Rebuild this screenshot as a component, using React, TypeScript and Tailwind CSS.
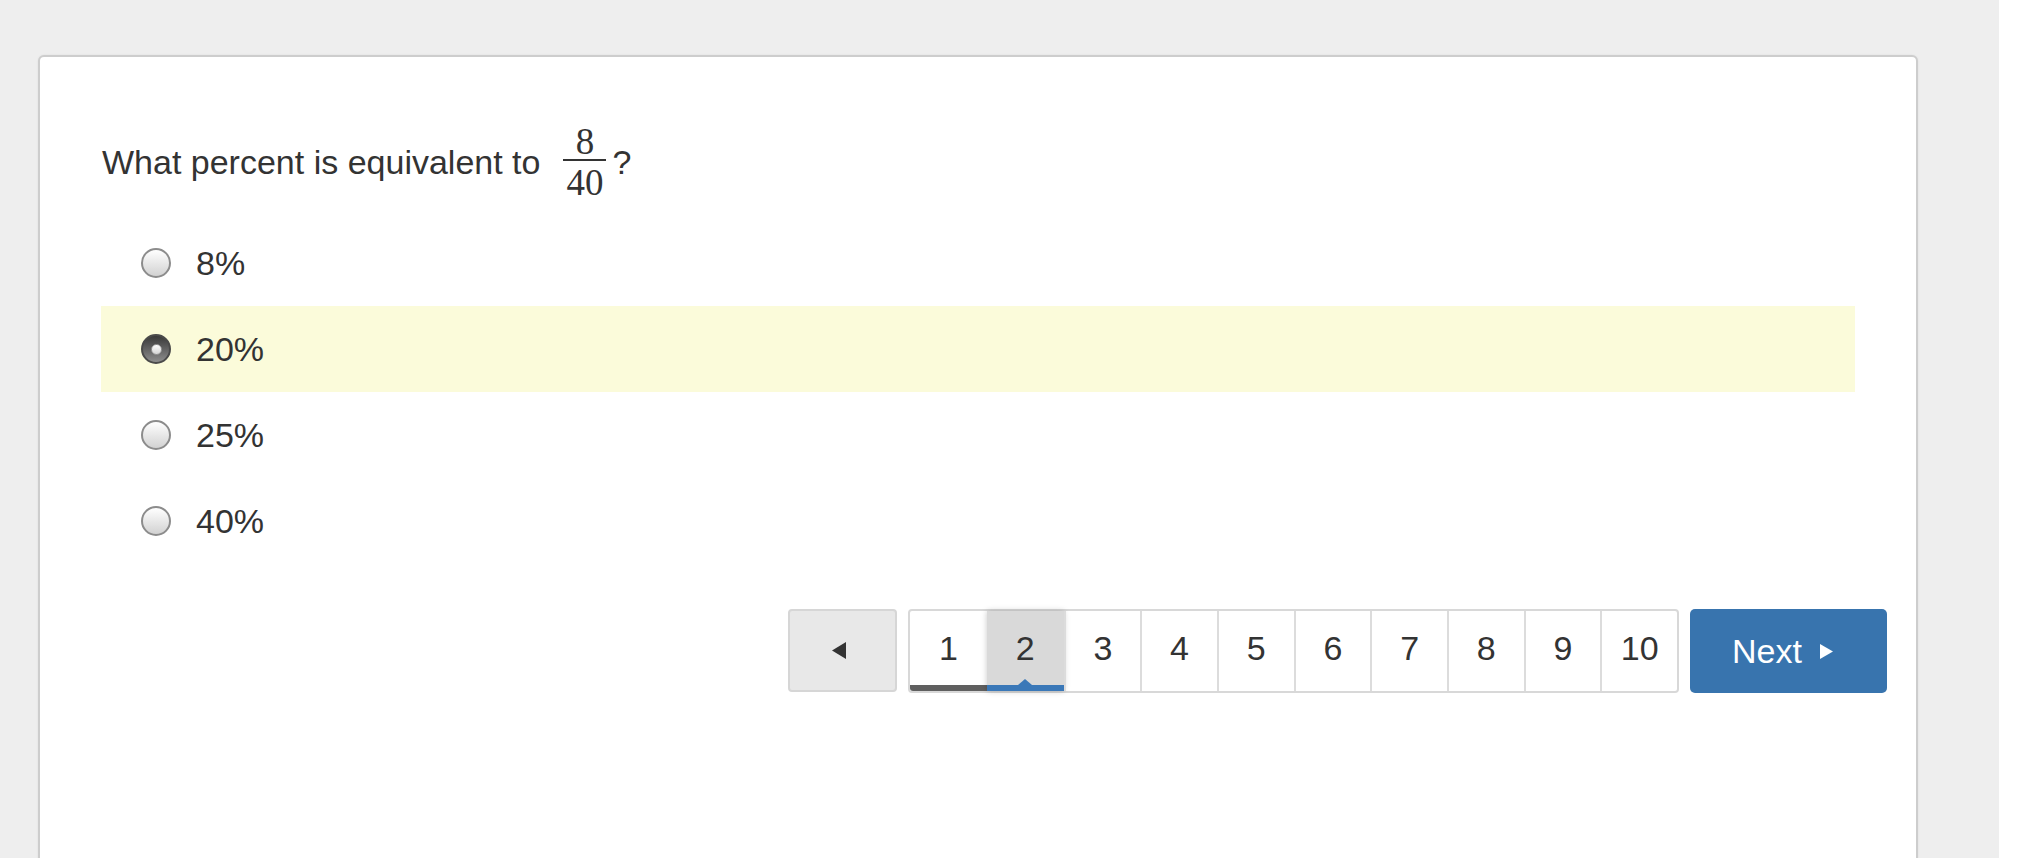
const OPTIONS = ["8%", "20%", "25%", "40%"];
const PAGES = [1, 2, 3, 4, 5, 6, 7, 8, 9, 10];

function Radio({ checked }: { checked: boolean }) {
  if (checked) {
    return (
      <span className="flex h-[30px] w-[30px] shrink-0 items-center justify-center rounded-full border-2 border-[#4a4a4a] bg-linear-to-b from-[#3a3a3a] to-[#8e8e8e]">
        <span className="h-[11px] w-[11px] rounded-full border border-[#9a9a9a] bg-linear-to-b from-white to-[#d4d4d4]" />
      </span>
    );
  }
  return (
    <span className="h-[30px] w-[30px] shrink-0 rounded-full border-2 border-[#8c8c8c] bg-linear-to-b from-white to-[#d2d2d2]" />
  );
}

export default function App() {
  const selected = 1;
  const page = 2;

  return (
    <div className="flex h-[858px] w-[2040px] overflow-hidden bg-white font-['Liberation_Sans',Arial,sans-serif] text-[#333]">
      <div className="w-[1999px] shrink-0 bg-[#eeeeee] pl-[38px] pt-[55px]">
        <div className="h-[840px] w-[1880px] rounded-t-[6px] border-2 border-[#cdcdcd] bg-white pt-[67px] shadow-[0_0_2px_rgba(0,0,0,0.08)]">
          {/* question + answers */}
          <div className="px-[61px]">
            <div className="flex items-center text-[34px] leading-[40px]">
              <span className="pl-[1px]">What percent is equivalent to</span>
              <span className="mb-[2px] ml-[23px] mr-[6px] mt-[3px] flex flex-col font-['Liberation_Serif',serif] text-[37px]">
                <span className="px-[3px] text-center leading-[30px]">8</span>
                <span className="mt-[2px] h-[2px] bg-[#333]" />
                <span className="mt-[7px] px-[3px] text-center leading-[30px]">40</span>
              </span>
              <span>?</span>
            </div>

            <div className="mt-[20px] flex flex-col">
              {OPTIONS.map((o, i) => (
                <div
                  key={o}
                  className={`flex h-[86px] items-center gap-[25px] pl-[40px] text-[34px] ${
                    i === selected ? "bg-[#fbfbda]" : ""
                  }`}
                >
                  <Radio checked={i === selected} />
                  <span>{o}</span>
                </div>
              ))}
            </div>
          </div>

          {/* pagination */}
          <div className="mt-[45px] flex items-start justify-end gap-[11px] pr-[29px]">
            <button className="flex h-[83px] w-[109px] items-center justify-center rounded-[4px] border-2 border-[#d6d6d6] bg-[#e8e8e8]">
              <svg width="14" height="17" viewBox="0 0 14 17" className="-ml-[8px]">
                <path d="M0 8.5 14 0v17z" fill="#333" />
              </svg>
            </button>

            <div className="flex h-[84px] rounded-[4px] border-2 border-[#d8d8d8] bg-white">
              {PAGES.map((n) => (
                <div
                  key={n}
                  className={`relative flex w-[76.7px] flex-col ${n > 1 && n !== page ? "border-l-2 border-[#dcdcdc]" : ""} ${
                    n === page ? "bg-[#d9d9d9] shadow-[0_0_6px_rgba(0,0,0,0.22)]" : ""
                  }`}
                >
                  <span className="flex flex-1 items-center justify-center text-[34px]">{n}</span>
                  {n < page && <span className="h-[6px] rounded-bl-[3px] bg-[#5f5f5f]" />}
                  {n === page && (
                    <span className="relative h-[6px] bg-[#3a78b8]">
                      <span className="absolute -top-[6px] left-1/2 h-0 w-0 -translate-x-1/2 border-x-[7px] border-b-[6px] border-x-transparent border-b-[#3a78b8]" />
                    </span>
                  )}
                  {n > page && <span className="h-[6px]" />}
                </div>
              ))}
            </div>

            <button className="flex h-[84px] w-[197px] items-center justify-center gap-[18px] rounded-[5px] bg-[#3874ae] pr-[12px] text-[34px] text-white">
              <span>Next</span>
              <svg width="13" height="15" viewBox="0 0 13 15">
                <path d="M13 7.5 0 0v15z" fill="#fff" />
              </svg>
            </button>
          </div>
        </div>
      </div>
      <div className="flex-1 bg-white" />
    </div>
  );
}
